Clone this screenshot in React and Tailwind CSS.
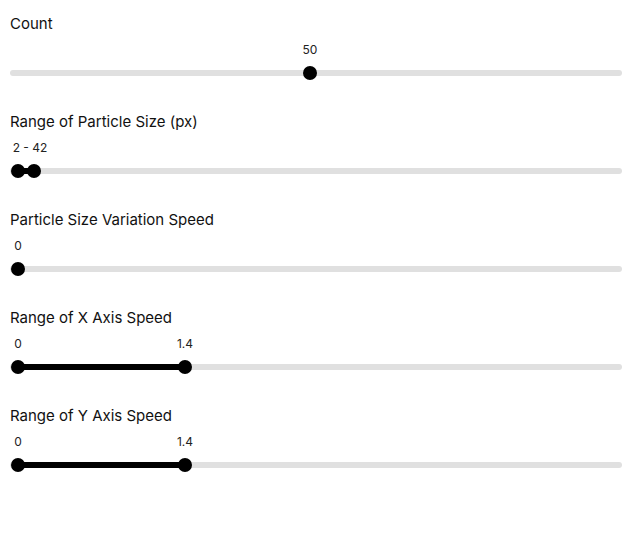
import React from 'react';

const sliders = [
    { label: 'Count', thumbs: [310], values: [{ text: '50', x: 310 }], fill: false },
    { label: 'Range of Particle Size (px)', thumbs: [18, 34], values: [{ text: '2 - 42', x: 30 }], fill: true },
    { label: 'Particle Size Variation Speed', thumbs: [18], values: [{ text: '0', x: 18 }], fill: false },
    { label: 'Range of X Axis Speed', thumbs: [18, 185], values: [{ text: '0', x: 18 }, { text: '1.4', x: 185 }], fill: true },
    { label: 'Range of Y Axis Speed', thumbs: [18, 185], values: [{ text: '0', x: 18 }, { text: '1.4', x: 185 }], fill: true },
];

const Slider = ({ label, thumbs, values, fill }) => {
    // positions are page px, track starts at x=10
    const toLocal = x => x - 10;
    return (
        <div className="h-[98px]">
            <div className="h-5 text-[15px] leading-5 text-[#111]">{label}</div>
            <div className="relative mt-[36px] h-[6px] w-[612px] rounded-full bg-[#e0e0e0]">
                {fill && thumbs.length > 1 && (
                    <div
                        className="absolute top-0 h-[6px] bg-black"
                        style={{ left: toLocal(thumbs[0]), width: thumbs[1] - thumbs[0] }}
                    />
                )}
                {values.map((v, i) => (
                    <span
                        key={i}
                        className="absolute top-[-28px] -translate-x-1/2 whitespace-nowrap text-xs leading-4 text-[#222]"
                        style={{ left: toLocal(v.x) }}
                    >
                        {v.text}
                    </span>
                ))}
                {thumbs.map((t, i) => (
                    <span
                        key={i}
                        className="absolute top-[-4px] h-[14px] w-[14px] -translate-x-1/2 rounded-full bg-black"
                        style={{ left: toLocal(t) }}
                    />
                ))}
            </div>
        </div>
    );
};

export default function App() {
    return (
        <div className="min-h-[540px] w-[638px] bg-white pl-[10px] pt-[14px] font-['Inter','Noto_Sans',sans-serif]">
            {sliders.map(s => (
                <Slider key={s.label} {...s} />
            ))}
        </div>
    );
}
